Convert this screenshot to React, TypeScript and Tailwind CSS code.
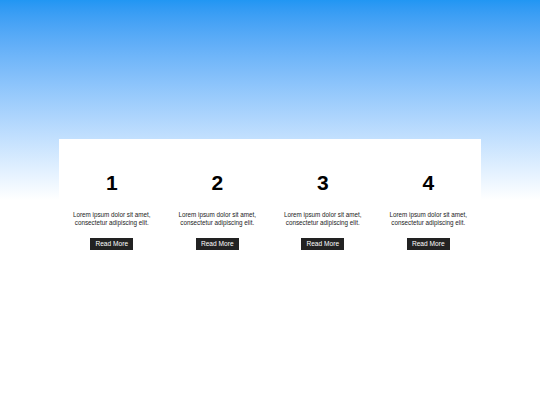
const items = [1, 2, 3, 4];

const Card = ({ n }: { n: number }) => (
  <div className="flex flex-col items-center text-center">
    <h2 className="text-[21px] leading-[24px] font-bold text-black">{n}</h2>
    <p className="mt-[16px] text-[6.3px] leading-[8px] text-[#222]">
      Lorem ipsum dolor sit amet,
      <br />
      consectetur adipiscing elit.
    </p>
    <button className="mt-[11px] h-[12px] px-[5px] bg-[#222] text-white text-[6.6px] leading-[12px]">
      Read More
    </button>
  </div>
);

export default function App() {
  return (
    <div className="min-h-[405px] bg-white font-['Liberation_Sans',Arial,sans-serif]">
      <div className="h-[200px] bg-gradient-to-b from-[#2196f3] to-white" />
      <div className="mx-auto -mt-[61px] w-[422px] bg-white pt-[32px] pb-4">
        <div className="grid grid-cols-4">
          {items.map(n => (
            <Card key={n} n={n} />
          ))}
        </div>
      </div>
    </div>
  );
}
